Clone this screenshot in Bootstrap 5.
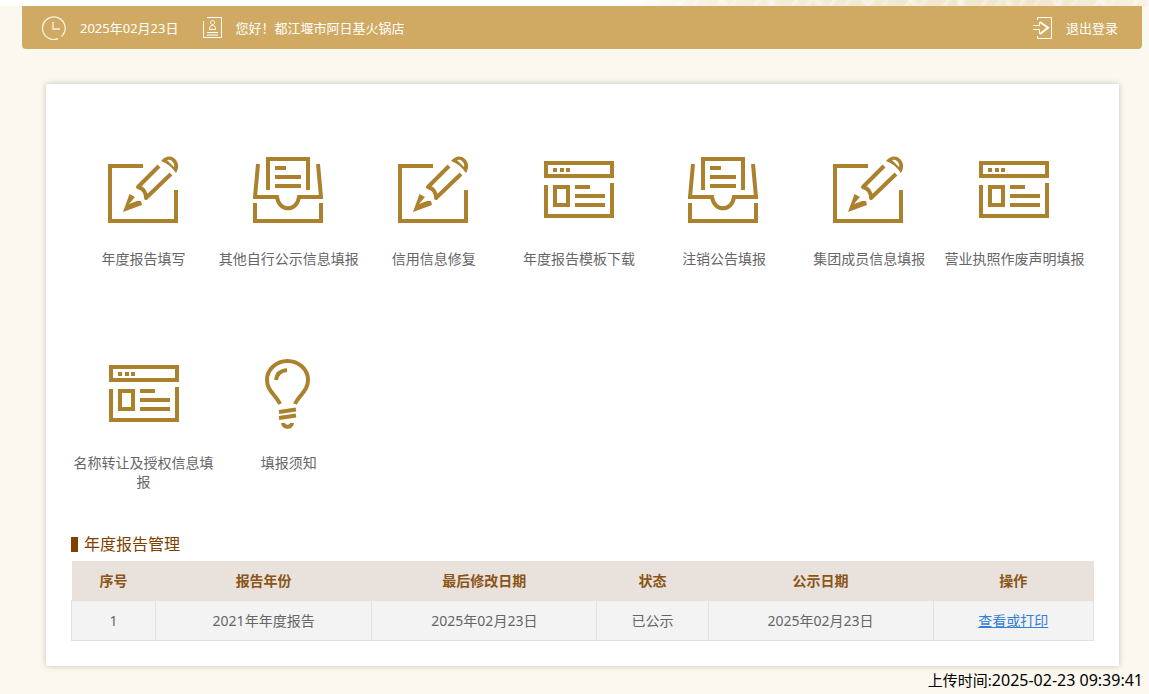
<!DOCTYPE html>
<html lang="zh-CN">
<head>
<meta charset="utf-8">
<meta name="viewport" content="width=device-width, initial-scale=1">
<title>年度报告管理</title>
<link href="https://cdn.jsdelivr.net/npm/bootstrap@5.3.0/dist/css/bootstrap.min.css" rel="stylesheet">
<style>
  body { font-family: "Noto Sans", "Noto Sans CJK SC", sans-serif; font-size: 14px; line-height: 20px; color: #666; background: #fbf8f0; }
  .banner { height: 6px; background:
    repeating-linear-gradient(125deg, rgba(255,255,255,.4) 0 2px, rgba(255,255,255,0) 5px 11px, rgba(255,255,255,.3) 13px 14px, rgba(255,255,255,0) 17px 31px),
    repeating-linear-gradient(65deg, rgba(255,255,255,0) 0 8px, rgba(255,255,255,.4) 11px 13px, rgba(255,255,255,0) 18px 43px),
    linear-gradient(90deg, #fff 54%, #f8f0de 62%, #f3e8d0 76%, #f1e5cb 90%, #f8f2e4); }
  .userbar { margin: 0 7px 0 22px; padding: 0 24px 0 20px; min-height: 43px; background: #d0aa62; border-radius: 0 0 4px 4px; font-size: 13px; color: #fff; }
  .userbar svg { display: block; }
  .bar-item { display: flex; align-items: center; column-gap: 14px; }
  .panel { margin: 35px 30px 0 46px; padding: 63px 25px 25px; background: #fff; box-shadow: 0 0 6px rgba(0,0,0,.22); }
  .tiles { display: grid; grid-template-columns: repeat(7, 1fr); margin-right: 7px; row-gap: 64px; }
  .tile { color: #666; line-height: 19px; padding-top: 8px; min-height: 140px; }
  .tile svg { display: block; margin-bottom: 22px; }
  .section-title { font-size: 16px; line-height: 24px; color: #804000; margin: 41px 0 5px; font-weight: 400; column-gap: 6px; }
  .section-title::before { content: ""; width: 7px; height: 15px; background: #804000; }
  .report-table { color: #666; line-height: 20px; table-layout: fixed; }
  .report-table th { background: #e9e1dc; color: #8a5516; font-weight: 700; padding: 10px 4px 9px; border: 0; }
  .report-table td { background: #f3f3f3; color: #666; padding: 9px 4px; border: 1px solid #e1e1e1; height: 40px; }
  .report-table a { color: #337fd5; }
  .stamp { margin-right: 6px; padding-top: 4px; font-size: 15px; color: #000; }
  .stamp time { font-size: 16px; }
</style>
</head>
<body>
<svg class="d-none" xmlns="http://www.w3.org/2000/svg">
  <symbol id="i-edit" viewBox="1 0 72 72"><g fill="none" stroke="#ac812d" stroke-width="4">
    <path d="M36 11H3v55h66V35"/>
    <path d="M52 11 31 32q8 2 8 11L64 19" stroke-linejoin="round"/></g>
    <path fill="#ac812d" fill-rule="evenodd" d="M54 6C58 1 64 0 68 4 72 8 72 13 69 18 65 12 60 8 54 6ZM60 5 67 12Q68 9 65 6 63 4 60 5Z"/>
    <path fill="#ac812d" d="M22.500 39 16 57l19-7-1-4-4 0-8 3 6-7z"/></symbol>
  <symbol id="i-inbox" viewBox="1 0 72 72"><g fill="none" stroke="#ac812d" stroke-width="4">
    <path d="M16 35V4h40v31M23 13h11M23 22h26M23 31h26"/>
    <path d="M6 9 3 42h22c2 15 20 15 22 0h22L66 9"/><path d="M3 48v18h66V48"/></g></symbol>
  <symbol id="i-page" viewBox="0 0 72 72"><g fill="none" stroke="#ac812d" stroke-width="4">
    <path d="M3 8h66v13H3zM3 30v31h66V28M12 32h13v18H12zM32 32h15M32 41h30M32 50h30"/>
    <path d="M10 15h4m3 0h4m2 0h4"/></g></symbol>
  <symbol id="i-bulb" viewBox="1 3 72 72"><g fill="none" stroke="#ac812d" stroke-width="4">
    <path d="M28 48C24 39 15 35 15 24a20.500 19 0 0 1 41 0C56 35 47 39 43 48"/>
    <path d="M24 24q1-9 11-10M27 56l17-2.500M27 62l17-2.500"/><path d="M31 67c0 5 9 5 9 0" /></g></symbol>
</svg>

<div class="banner"></div>
<header class="userbar d-flex align-items-center">
  <div class="bar-item">
    <svg width="24" height="24" viewBox="0 0 24 24" fill="none" stroke="#fff" stroke-opacity=".85" stroke-width="1.300"><path d="M19.500 20.500A11.300 11.300 0 1 0 16 22.700M21 18.500l1-2M11 6v7h7"/></svg>
    <span>2025年02月23日</span>
  </div>
  <div class="bar-item ms-4">
    <svg width="19" height="22" viewBox="0 0 19 22" fill="none" stroke="#fff"><path d="M4 .5h14.500v20H.5V4M4 15.500h11M4 18h11M6.500 12.500c0-3 1-4 3-4s3 1 3 4zM9.500 3.500a2 2 0 1 0 .1 0"/></svg>
    <span>您好！都江堰市阿日基火锅店</span>
  </div>
  <a href="#" class="bar-item ms-auto text-white text-decoration-none">
    <svg width="19" height="22" viewBox="0 0 19 22" fill="none" stroke="#fff"><path d="M4.500 3V.5h14v21h-14V19M0 8.500h6.500V5M0 12.500h6.500V17"/><path d="M7 5l8 5.700L7 17" stroke-width="2"/></svg>
    <span>退出登录</span>
  </a>
</header>

<main class="panel">
  <nav class="tiles text-center">
    <a href="#" class="tile d-flex flex-column align-items-center text-decoration-none"><svg width="72" height="72"><use href="#i-edit"/></svg>年度报告填写</a>
    <a href="#" class="tile d-flex flex-column align-items-center text-decoration-none"><svg width="72" height="72"><use href="#i-inbox"/></svg>其他自行公示信息填报</a>
    <a href="#" class="tile d-flex flex-column align-items-center text-decoration-none"><svg width="72" height="72"><use href="#i-edit"/></svg>信用信息修复</a>
    <a href="#" class="tile d-flex flex-column align-items-center text-decoration-none"><svg width="72" height="72"><use href="#i-page"/></svg>年度报告模板下载</a>
    <a href="#" class="tile d-flex flex-column align-items-center text-decoration-none"><svg width="72" height="72"><use href="#i-inbox"/></svg>注销公告填报</a>
    <a href="#" class="tile d-flex flex-column align-items-center text-decoration-none"><svg width="72" height="72"><use href="#i-edit"/></svg>集团成员信息填报</a>
    <a href="#" class="tile d-flex flex-column align-items-center text-decoration-none"><svg width="72" height="72"><use href="#i-page"/></svg>营业执照作废声明填报</a>
    <a href="#" class="tile d-flex flex-column align-items-center text-decoration-none"><svg width="72" height="72"><use href="#i-page"/></svg>名称转让及授权信息填报</a>
    <a href="#" class="tile d-flex flex-column align-items-center text-decoration-none"><svg width="72" height="72"><use href="#i-bulb"/></svg>填报须知</a>
  </nav>

  <h2 class="section-title d-flex align-items-center">年度报告管理</h2>
  <table class="report-table table mb-0 text-center align-middle">
    <colgroup><col style="width:8.200%"><col style="width:21.200%"><col style="width:22%"><col style="width:10.900%"><col style="width:22%"><col style="width:15.700%"></colgroup>
    <thead><tr><th>序号</th><th>报告年份</th><th>最后修改日期</th><th>状态</th><th>公示日期</th><th>操作</th></tr></thead>
    <tbody><tr><td>1</td><td>2021年年度报告</td><td>2025年02月23日</td><td>已公示</td><td>2025年02月23日</td><td><a href="#">查看或打印</a></td></tr></tbody>
  </table>
</main>
<footer class="stamp text-end">上传时间:<time>2025-02-23 09:39:41</time></footer>
<script src="https://cdn.jsdelivr.net/npm/bootstrap@5.3.0/dist/js/bootstrap.bundle.min.js"></script>
</body>
</html>
